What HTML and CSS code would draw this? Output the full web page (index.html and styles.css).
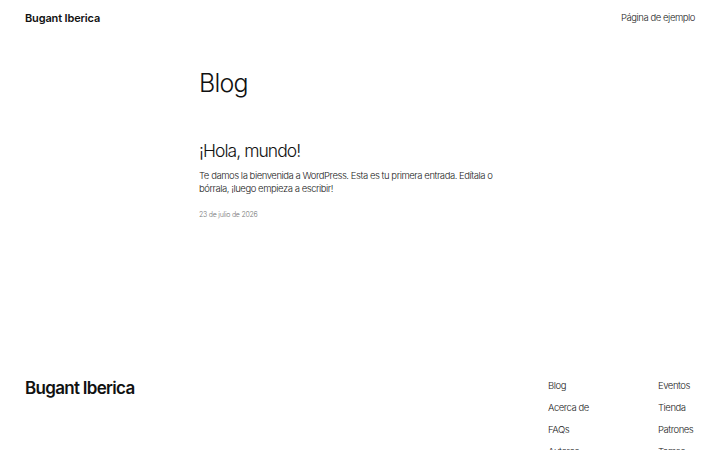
FILE: index.html
```html
<!DOCTYPE html>
<html lang="es">
<head>
<meta charset="utf-8">
<title>Blog – Bugant Iberica</title>
<link rel="stylesheet" href="styles.css">
</head>
<body>
<header class="site-header">
  <a class="site-title" href="#">Bugant Iberica</a>
  <nav class="header-nav"><a href="#">Página de ejemplo</a></nav>
</header>
<main class="main">
  <div class="content">
    <h1 class="page-title">Blog</h1>
    <article class="post">
      <h2 class="post-title"><a href="#">¡Hola, mundo!</a></h2>
      <p class="excerpt">Te damos la bienvenida a WordPress. Esta es tu primera entrada. Edítala o bórrala, ¡luego empieza a escribir!</p>
      <div class="post-date">23 de julio de 2026</div>
    </article>
  </div>
</main>
<footer class="site-footer">
  <div class="footer-brand">Bugant Iberica</div>
  <div class="footer-cols">
    <ul class="footer-list">
      <li><a href="#">Blog</a></li>
      <li><a href="#">Acerca de</a></li>
      <li><a href="#">FAQs</a></li>
      <li><a href="#">Autores</a></li>
    </ul>
    <ul class="footer-list footer-list-right">
      <li><a href="#">Eventos</a></li>
      <li><a href="#">Tienda</a></li>
      <li><a href="#">Patrones</a></li>
      <li><a href="#">Temas</a></li>
    </ul>
  </div>
</footer>
</body>
</html>
```
FILE: styles.css
```css
html, body {
  margin: 0;
  padding: 0;
  background: #ffffff;
}
body {
  font-family: Inter, "Noto Sans", sans-serif;
  color: #111111;
  width: 720px;
  height: 450px;
  overflow: hidden;
}
a {
  color: inherit;
  text-decoration: none;
}
.site-header {
  display: flex;
  justify-content: space-between;
  align-items: center;
  padding: 10px 25px 0;
  height: 15px;
}
.site-title {
  font-size: 11px;
  font-weight: 600;
  letter-spacing: -0.15px;
}
.header-nav {
  font-size: 9.5px;
  font-weight: 300;
  letter-spacing: -0.45px;
  color: #222;
}
.main {
  display: flex;
  justify-content: center;
  height: 323px;
}
.content {
  width: 322px;
  padding-top: 43px;
}
.page-title {
  margin: 0;
  font-size: 25px;
  font-weight: 300;
  line-height: 30px;
  letter-spacing: -0.8px;
}
.post {
  margin-top: 42px;
}
.post-title {
  margin: 0;
  font-size: 17.5px;
  font-weight: 300;
  line-height: 22px;
  letter-spacing: -0.95px;
}
.excerpt {
  margin: 7px 0 0;
  font-size: 9.5px;
  font-weight: 300;
  line-height: 13px;
  letter-spacing: -0.45px;
  color: #222;
}
.post-date {
  margin-top: 15px;
  font-size: 7px;
  font-weight: 300;
  letter-spacing: -0.25px;
  color: #777;
}
.site-footer {
  display: flex;
  justify-content: space-between;
  padding: 0 25px;
}
.footer-brand {
  font-size: 17px;
  font-weight: 600;
  line-height: 22px;
  padding-top: 29px;
  letter-spacing: -0.7px;
}
.footer-cols {
  display: flex;
  padding-top: 27px;
}
.footer-list {
  list-style: none;
  margin: 0;
  padding: 0;
  width: 110px;
}
.footer-list li {
  font-size: 9.5px;
  font-weight: 300;
  line-height: 22px;
  letter-spacing: -0.45px;
  color: #222;
  white-space: nowrap;
}
.footer-list-right {
  width: 37px;
}
```
